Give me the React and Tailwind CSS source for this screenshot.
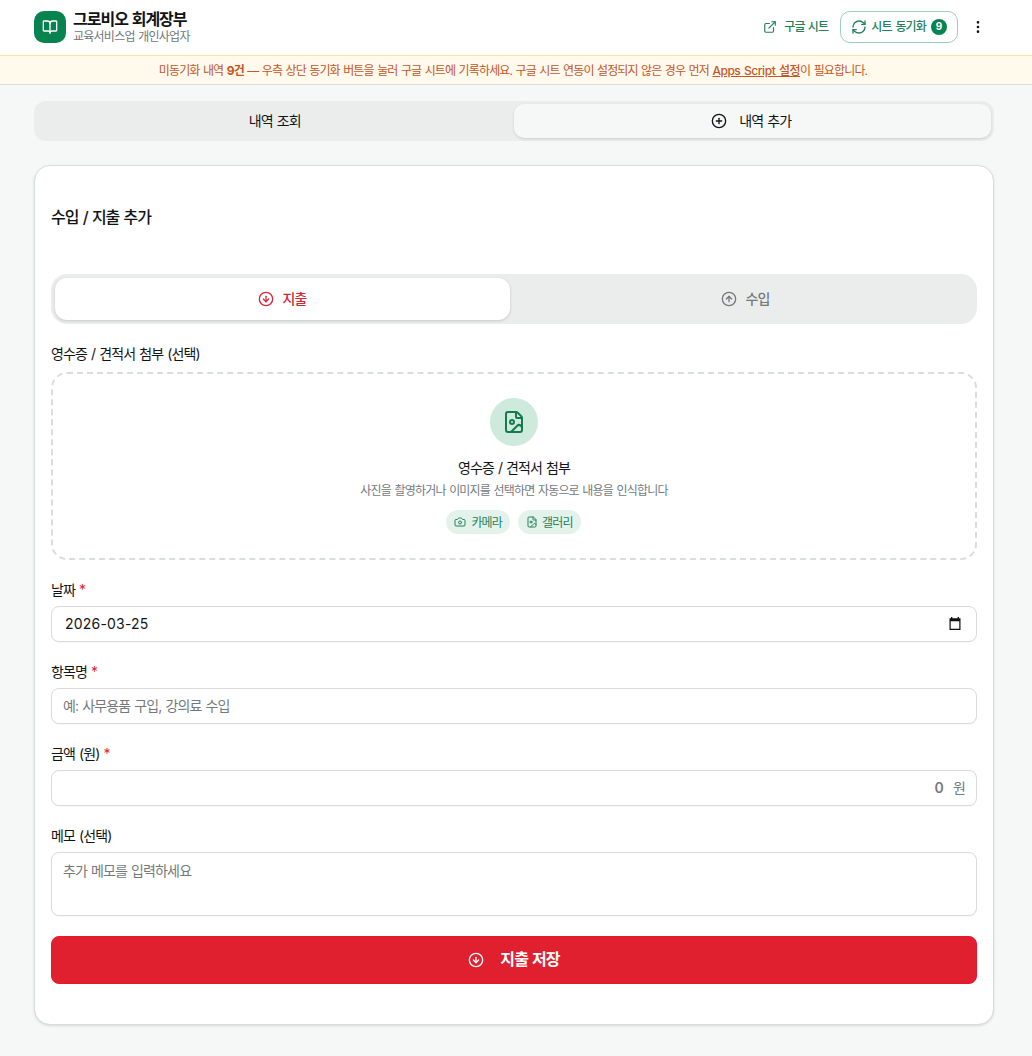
import {
  BookOpen,
  Camera,
  CircleArrowDown,
  CircleArrowUp,
  CirclePlus,
  EllipsisVertical,
  ExternalLink,
  FileImage,
  RefreshCw,
} from "lucide-react"

const Label = ({ children, required }) => (
  <label className="block text-sm leading-[14px] font-normal">
    {children}
    {required && <span className="text-[#e11d2e]"> *</span>}
  </label>
)

const fieldBox =
  "w-full rounded-lg border border-[#d9dbda] bg-white text-sm tracking-[-0.85px] [word-spacing:0.85px] shadow-[0_1px_1px_rgba(0,0,0,0.03)]"

function Header() {
  return (
    <header className="h-[55px] bg-white pl-[34px] pr-[46px] pb-[2px] flex items-center justify-between">
      <div className="flex items-center gap-[7px]">
        <div className="w-8 h-8 rounded-[10px] bg-[#07834f] text-white flex items-center justify-center">
          <BookOpen size={16} />
        </div>
        <div className="pt-px">
          <h1 className="text-base leading-[18px] font-bold tracking-[-1px] [word-spacing:1px]">그로비오 회계장부</h1>
          <p className="pt-px text-xs leading-4 tracking-[-0.75px] text-[#70777a]">교육서비스업 개인사업자</p>
        </div>
      </div>

      <div className="flex items-center text-xs font-medium text-[#23815a]">
        <a href="#" className="flex items-center gap-[7px] mr-3">
          <ExternalLink size={14} />
          구글 시트
        </a>
        <button className="h-8 px-[10px] rounded-[10px] border border-[#9fcdb9] flex items-center mr-3 [word-spacing:1.5px]">
          <RefreshCw size={16} className="mr-1" />
          시트 동기화
          <span className="ml-[5px] w-4 h-4 rounded-full bg-[#07834f] text-white text-[10px] tracking-normal font-bold flex items-center justify-center">
            9
          </span>
        </button>
        <button className="text-[#111]">
          <EllipsisVertical size={16} />
        </button>
      </div>
    </header>
  )
}

export default function App() {
  return (
    <div className="min-h-screen bg-[#f6f8f8] text-[#111416] tracking-[-0.85px] [word-spacing:0.85px] font-['Inter','Noto_Sans_CJK_KR',sans-serif]">
      <Header />

      {/* Unsynced notice */}
      <div className="h-[30px] border-t border-t-[#fbe5a2] border-b border-b-[#dadfdf] bg-[#fffaeb] pt-px pr-[6px] flex items-center justify-center text-xs text-[#c5562a]">
        <p>
          미동기화 내역 <strong>9건</strong> — 우측 상단 동기화 버튼을 눌러 구글 시트에 기록하세요. 구글 시트 연동이
          설정되지 않은 경우 먼저{" "}
          <a href="#" className="underline font-medium tracking-[-0.45px]">Apps Script 설정</a>이 필요합니다.
        </p>
      </div>

      <main className="pl-[34px] pr-[38px] pt-4">
        <div className="grid grid-cols-2 h-10 p-[3px] pl-[2px] rounded-xl bg-[#ebedec] text-sm font-normal">
          <button className="flex items-center justify-center [word-spacing:1px]">내역 조회</button>
          <button className="flex items-center justify-center gap-3 pr-[2px] rounded-[10px] bg-[#f6f8f8] shadow-sm [word-spacing:1px]">
            <CirclePlus size={16} />
            내역 추가
          </button>
        </div>

        {/* Entry form */}
        <section className="mt-6 h-[860px] rounded-2xl border border-[#d9dddc] bg-white shadow-sm px-4">
          <h2 className="pt-[39px] text-base leading-6 font-medium tracking-[-1px] [word-spacing:1px]">
            수입 / 지출 추가
          </h2>

          <div className="mt-[45px] grid grid-cols-2 gap-2 h-[50px] p-1 rounded-2xl bg-[#ebedec] text-sm font-medium">
            <button className="flex items-center justify-center gap-2 rounded-xl bg-white text-[#d42839] shadow-[0_1px_3px_rgba(0,0,0,0.16)]">
              <CircleArrowDown size={16} />
              지출
            </button>
            <button className="flex items-center justify-center gap-2 text-[#747a7c]">
              <CircleArrowUp size={16} />
              수입
            </button>
          </div>

          <div className="mt-[23px]">
            <Label>영수증 / 견적서 첨부 (선택)</Label>
            <div className="mt-[11px] h-[188px] rounded-2xl border-2 border-dashed border-[#d9dddc] flex flex-col items-center pt-6">
              <div className="w-12 h-12 rounded-full bg-[#cdeadc] text-[#167a4d] flex items-center justify-center">
                <FileImage size={24} />
              </div>
              <p className="mt-3 text-sm leading-5 font-normal">영수증 / 견적서 첨부</p>
              <p className="mt-[5px] text-xs leading-4 tracking-[-0.8px] text-[#747a7c]">
                사진을 촬영하거나 이미지를 선택하면 자동으로 내용을 인식합니다
              </p>
              <div className="mt-[11px] mr-px flex gap-2 text-xs text-[#23815a]">
                <span className="h-6 px-2 rounded-full bg-[#e4f2ec] flex items-center gap-[5px]">
                  <Camera size={12} />
                  <span className="pt-px">카메라</span>
                </span>
                <span className="h-6 px-2 rounded-full bg-[#e4f2ec] flex items-center gap-1">
                  <FileImage size={12} />
                  <span className="pt-px">갤러리</span>
                </span>
              </div>
            </div>
          </div>

          <div className="mt-[23px]">
            <Label required>날짜</Label>
            <div className={`${fieldBox} mt-[9px] h-9 px-[13px] flex items-center justify-between`}>
              <span className="tracking-[0.2px]">2026-03-25</span>
              <svg className="mr-[2px] mb-px" width="12" height="13" viewBox="0 0 12 13" fill="#111">
                <path d="M2 0h1.4v1.2h5.2V0H10v1.2h1.5V13H.5V1.2H2zM1.7 4.2v7.6h8.6V4.2z" fillRule="evenodd" />
              </svg>
            </div>
          </div>

          <div className="mt-[23px]">
            <Label required>항목명</Label>
            <input
              className={`${fieldBox} mt-[9px] h-9 px-[11px] pb-px block placeholder:text-[#747a7c]`}
              placeholder="예: 사무용품 구입, 강의료 수입"
            />
          </div>

          <div className="mt-[23px]">
            <Label required>금액 (원)</Label>
            <div className={`${fieldBox} mt-[9px] h-9 pl-3 pr-[11px] flex items-center justify-end gap-[10px] text-[#747a7c]`}>
              <span className="font-semibold">0</span>
              <span>원</span>
            </div>
          </div>

          <div className="mt-[23px]">
            <Label>메모 (선택)</Label>
            <textarea
              className={`${fieldBox} mt-[9px] h-16 px-[11px] py-2 block resize-none placeholder:text-[#747a7c]`}
              placeholder="추가 메모를 입력하세요"
            />
          </div>

          <button className="mt-5 w-full h-12 rounded-lg border border-[#f0142f] bg-[#e0202e] text-white text-base font-bold flex items-center justify-center gap-4 [word-spacing:1px]">
            <CircleArrowDown size={16} />
            <span className="pb-[2px]">지출 저장</span>
          </button>
        </section>
      </main>
    </div>
  )
}
